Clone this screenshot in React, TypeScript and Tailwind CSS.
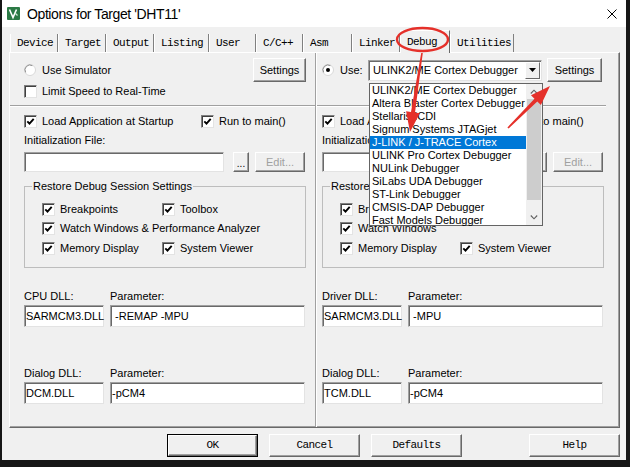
import React from "react";

const sans = "font-['Liberation_Sans',Arial,sans-serif]";
const mono = "font-['Liberation_Mono','Courier_New',monospace]";

// Fenster-Reiter: Breite in px, Debug ist aktiv
const tabs: { label: string; w: string }[] = [
  { label: "Device", w: "w-[48px]" },
  { label: "Target", w: "w-[48px]" },
  { label: "Output", w: "w-[48px]" },
  { label: "Listing", w: "w-[55px]" },
  { label: "User", w: "w-[47px]" },
  { label: "C/C++", w: "w-[47px]" },
  { label: "Asm", w: "w-[49px]" },
  { label: "Linker", w: "w-[48px]" },
  { label: "Debug", w: "w-[50px]" },
  { label: "Utilities", w: "w-[64px]" },
];

const debuggers = [
  "ULINK2/ME Cortex Debugger",
  "Altera Blaster Cortex Debugger",
  "Stellaris ICDI",
  "Signum Systems JTAGjet",
  "J-LINK / J-TRACE Cortex",
  "ULINK Pro Cortex Debugger",
  "NULink Debugger",
  "SiLabs UDA Debugger",
  "ST-Link Debugger",
  "CMSIS-DAP Debugger",
  "Fast Models Debugger",
];

function Radio({ on = false }: { on?: boolean }) {
  return (
    <svg width="12" height="12" viewBox="0 0 12 12" className="shrink-0">
      <circle cx="6" cy="6" r="5.5" fill="#fff" stroke="#d8d8d8" />
      <path d="M1.6 8.4 A5 5 0 0 1 8.4 1.6" fill="none" stroke="#8c8c8c" />
      {on && <circle cx="6" cy="6" r="2" fill="#000" />}
    </svg>
  );
}

function Box({ on = true }: { on?: boolean }) {
  return (
    <span className="flex h-[13px] w-[13px] shrink-0 items-center justify-center border border-t-[#808080] border-l-[#808080] border-r-[#e3e3e3] border-b-[#e3e3e3] bg-white shadow-[inset_1px_1px_0_#404040]">
      {on && (
        <svg width="9" height="9" viewBox="0 0 9 9">
          <path d="M1.3 4.3 L3.5 6.6 L7.7 1.8" fill="none" stroke="#000" strokeWidth="1.9" />
        </svg>
      )}
    </span>
  );
}

function CheckItem({ label, on = true, className = "" }: { label: string; on?: boolean; className?: string }) {
  return (
    <div className={`flex items-center ${className}`}>
      <Box on={on} />
      <span className="ml-[5px] whitespace-nowrap">{label}</span>
    </div>
  );
}

function Btn({ children, className = "", disabled = false }: { children: React.ReactNode; className?: string; disabled?: boolean }) {
  return (
    <div
      className={`flex items-center justify-center border border-t-white border-l-white border-r-[#696969] border-b-[#696969] bg-[#f0f0f0] shadow-[inset_-1px_-1px_0_#a0a0a0] ${disabled ? "text-[#a0a0a0]" : "text-black"} ${className}`}
    >
      {children}
    </div>
  );
}

function Field({ value = "", className = "" }: { value?: string; className?: string }) {
  return (
    <div
      className={`flex items-center whitespace-pre border border-t-[#a0a0a0] border-l-[#a0a0a0] border-r-[#e3e3e3] border-b-[#e3e3e3] bg-white pl-[1px] shadow-[inset_1px_1px_0_#696969] ${className}`}
    >
      {value}
    </div>
  );
}

function Lower({
  sep,
  watch,
  dllLabel,
  dll,
  param,
  dlg,
}: {
  sep: string;
  watch: string;
  dllLabel: string;
  dll: string;
  param: string;
  dlg: string;
}) {
  return (
    <>
      <div className={`mt-[5px] h-[2px] border-t border-t-[#a0a0a0] border-b border-b-white ${sep}`} />
      <div className="mt-[5px] flex h-[18px] items-center">
        <CheckItem label="Load Application at Startup" className="w-[177px]" />
        <CheckItem label="Run to main()" />
      </div>
      <div className="flex h-[20px] items-center">Initialization File:</div>
      <div className="mt-[2px] flex h-[20px]">
        <Field className="w-[200px]" />
        <Btn className="ml-[9px] w-[16px] !items-end pb-[2px] text-[10px] leading-none">...</Btn>
        <Btn disabled className="ml-[6px] w-[50px]">Edit...</Btn>
      </div>
      <div className="relative mt-[14px] h-[82px] w-[282px] border border-[#bdbdbd] pl-[17px] pt-[12px]">
        <span className="absolute -top-[8px] left-[7px] bg-[#f0f0f0] px-[1px] leading-[14px]">
          Restore Debug Session Settings
        </span>
        <div className="flex h-[20px] items-center">
          <CheckItem label="Breakpoints" className="w-[120px]" />
          <CheckItem label="Toolbox" />
        </div>
        <div className="flex h-[19px] items-center">
          <CheckItem label={watch} />
        </div>
        <div className="flex h-[20px] items-center">
          <CheckItem label="Memory Display" className="w-[120px]" />
          <CheckItem label="System Viewer" />
        </div>
      </div>
      <div className="mt-[20px] flex h-[16px] items-center">
        <span className="w-[86px]">{dllLabel}</span>
        <span>Parameter:</span>
      </div>
      <div className="mt-[1px] flex h-[22px]">
        <Field value={dll} className="w-[80px]" />
        <Field value={param} className="ml-[6px] w-[195px]" />
      </div>
      <div className="mt-[38px] flex h-[16px] items-center">
        <span className="w-[86px]">Dialog DLL:</span>
        <span>Parameter:</span>
      </div>
      <div className="mt-[1px] flex h-[22px]">
        <Field value={dlg} className="w-[80px]" />
        <Field value="-pCM4" className="ml-[6px] w-[195px]" />
      </div>
    </>
  );
}

export default function App() {
  return (
    <div className={`relative h-[467px] w-[630px] overflow-hidden bg-[#161616] pb-[7px] pl-[2px] pr-[4px] text-[11px] leading-none text-black ${sans}`}>
      <div className="flex h-full w-full flex-col bg-[#f0f0f0]">
        {/* Titelleiste */}
        <div className="flex h-[27px] shrink-0 items-center bg-white">
          <svg width="13" height="13" viewBox="0 0 13 13" className="ml-[5px]">
            <rect width="13" height="13" rx="1" fill="#2b7a45" />
            <path d="M2.5 2.5 L6 10.5 L9.5 2.5" fill="none" stroke="#fff" strokeWidth="1.6" />
            <path d="M8 6 L10.5 8.5" stroke="#cfe9d6" strokeWidth="1.2" />
          </svg>
          <span className="ml-[7px] text-[14px] tracking-[-0.4px]">Options for Target 'DHT11'</span>
          <svg width="10" height="10" viewBox="0 0 10 10" className="ml-auto mr-[9px]">
            <path d="M0.5 0.5 L9.5 9.5 M9.5 0.5 L0.5 9.5" stroke="#000" strokeWidth="1" />
          </svg>
        </div>

        {/* Reiter */}
        <div className={`flex h-[25px] shrink-0 items-end pl-[8px] text-[11px] tracking-[-0.6px] ${mono}`}>
          {tabs.map((t) =>
            t.label === "Debug" ? (
              <div
                key={t.label}
                className={`relative z-10 -mb-[1px] flex h-[23px] items-center border-l border-t border-r border-l-white border-t-white border-r-[#696969] bg-[#f0f0f0] pl-[6px] ${t.w}`}
              >
                {t.label}
              </div>
            ) : (
              <div
                key={t.label}
                className={`flex h-[18px] items-center border-l border-r border-l-white border-r-[#808080] pl-[6px] ${t.w}`}
              >
                {t.label}
              </div>
            )
          )}
        </div>

        {/* Inhalt */}
        <div className="ml-[7px] flex h-[376px] w-[611px] shrink-0 border border-t-white border-l-white border-r-[#696969] border-b-[#696969] shadow-[inset_-1px_-1px_0_#a0a0a0]">
          {/* linke Hälfte */}
          <div className="flex w-[305px] flex-col pl-[14px]">
            <div className="mt-[5px] flex h-[24px] w-[282px] items-center">
              <Radio />
              <span className="ml-[6px]">Use Simulator</span>
              <Btn className="ml-auto h-[24px] w-[53px]">Settings</Btn>
            </div>
            <div className="flex h-[18px] items-center">
              <CheckItem label="Limit Speed to Real-Time" on={false} />
            </div>
            <Lower
              sep="-ml-[14px] w-[305px]"
              watch="Watch Windows & Performance Analyzer"
              dllLabel="CPU DLL:"
              dll="SARMCM3.DLL"
              param=" -REMAP -MPU"
              dlg="DCM.DLL"
            />
          </div>

          <div className="h-full w-[2px] border-l border-r border-l-[#a0a0a0] border-r-white" />

          {/* rechte Hälfte */}
          <div className="flex flex-1 flex-col pl-[5px]">
            <div className="mt-[5px] flex h-[24px] items-center">
              <div className="flex w-[46px] items-center">
                <Radio on />
                <span className="ml-[6px]">Use:</span>
              </div>
              <div className="relative h-[21px] w-[174px]">
                <div className="flex h-full items-center border border-t-[#a0a0a0] border-l-[#a0a0a0] border-r-[#e3e3e3] border-b-[#e3e3e3] bg-white pl-[4px] shadow-[inset_1px_1px_0_#696969]">
                  ULINK2/ME Cortex Debugger
                </div>
                <div className="absolute bottom-[2px] right-[2px] top-[2px] flex w-[15px] items-center justify-center border border-t-white border-l-white border-r-[#696969] border-b-[#696969] bg-[#f0f0f0]">
                  <svg width="7" height="4" viewBox="0 0 7 4">
                    <path d="M0 0 H7 L3.5 4 Z" fill="#000" />
                  </svg>
                </div>
                {/* aufgeklappte Liste */}
                <div className="absolute left-[1px] top-[23px] z-20 flex h-[143px] w-[174px] border border-[#646464] bg-white">
                  <div className="flex flex-1 flex-col">
                    {debuggers.map((d) => (
                      <div
                        key={d}
                        className={`h-[13px] whitespace-nowrap pl-[2px] leading-[13px] ${d.startsWith("J-LINK") ? "bg-[#0078d7] text-white" : ""}`}
                      >
                        {d}
                      </div>
                    ))}
                  </div>
                  <div className="flex w-[16px] flex-col bg-[#f0f0f0]">
                    <div className="flex h-[15px] items-center justify-center">
                      <svg width="8" height="5" viewBox="0 0 8 5">
                        <path d="M0.8 4.5 L4 1.2 L7.2 4.5" fill="none" stroke="#606060" strokeWidth="1.1" />
                      </svg>
                    </div>
                    <div className="mx-[1px] h-[101px] bg-[#cdcdcd]" />
                    <div className="flex-1" />
                    <div className="flex h-[15px] items-center justify-center">
                      <svg width="8" height="5" viewBox="0 0 8 5">
                        <path d="M0.8 0.5 L4 3.8 L7.2 0.5" fill="none" stroke="#606060" strokeWidth="1.1" />
                      </svg>
                    </div>
                  </div>
                </div>
              </div>
              <Btn className="ml-[5px] h-[24px] w-[55px]">Settings</Btn>
            </div>
            <div className="h-[18px]" />
            <Lower
              sep="-ml-[5px] w-[289px]"
              watch="Watch Windows"
              dllLabel="Driver DLL:"
              dll="SARMCM3.DLL"
              param=" -MPU"
              dlg="TCM.DLL"
            />
          </div>
        </div>

        {/* Schaltflächen */}
        <div className={`mt-[6px] flex h-[23px] shrink-0 pl-[165px] text-[11px] tracking-[-0.6px] ${mono}`}>
          <div className="h-[23px] w-[91px] border border-black">
            <Btn className="h-full w-full">OK</Btn>
          </div>
          <Btn className="ml-[11px] h-[23px] w-[91px]">Cancel</Btn>
          <Btn className="ml-[11px] h-[23px] w-[91px]">Defaults</Btn>
          <Btn className="ml-[67px] h-[23px] w-[91px]">Help</Btn>
        </div>
      </div>

      {/* rote Markierungen */}
      <svg className="pointer-events-none absolute left-0 top-0 z-30" width="630" height="467" viewBox="0 0 630 467">
        <ellipse cx="422.5" cy="39.5" rx="25.5" ry="11.5" fill="none" stroke="#e5302a" strokeWidth="2.4" />
        <polygon
          points="422.8,53.1 415,112.5 419.9,113.3 410,132 406.1,111.2 411,111.9 421.2,52.9"
          fill="#e5302a"
        />
        <polygon
          points="508.6,128.6 537.3,101.5 540.9,105 550,86 531,95.2 534.5,98.7 507.4,127.4"
          fill="#e5302a"
        />
      </svg>
    </div>
  );
}
